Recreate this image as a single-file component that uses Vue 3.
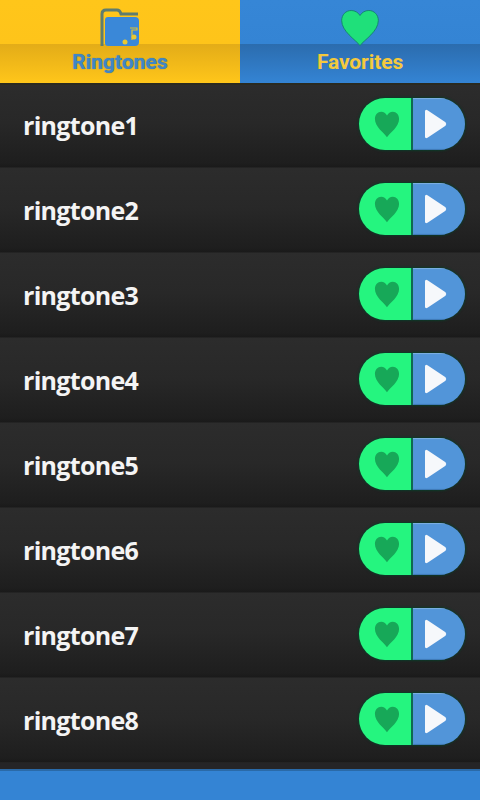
<script setup>
const rows = ['ringtone1','ringtone2','ringtone3','ringtone4','ringtone5','ringtone6','ringtone7','ringtone8']
const heart = 'M12 22.500C9.500 19 2 14 2 7.500C2 4 4.300 1.500 7.200 1.500C9.300 1.500 11 2.700 12 4.500C13 2.700 14.700 1.500 16.800 1.500C19.700 1.500 22 4 22 7.500C22 14 14.500 19 12 22.500Z'
</script>

<template>
  <div class="app">
    <div class="tabs">
      <div class="tab tab-on">
        <svg class="tab-icon" viewBox="0 0 40 40" width="40" height="40">
          <path d="M2 38V6Q2 2 6 2H17Q20 2 21 6H38" fill="none" stroke="#5f7d6e" stroke-width="3"/>
          <path d="M5 12Q5 9 8 9H35Q39 9 39 13V34Q39 38 35 38H8Q5 38 5 35Z" fill="#3a88d8"/>
          <path d="M30 20H37V22H32V32" fill="none" stroke="#e0c030" stroke-width="1.200"/>
          <circle cx="25" cy="34" r="2.500" fill="#e8c832"/>
          <circle cx="34" cy="29" r="2.500" fill="#e8c832"/>
        </svg>
        <span class="tab-label label-blue">Ringtones</span>
      </div>
      <div class="tab tab-off">
        <svg class="tab-icon" viewBox="0 0 24 24" width="44" height="40" preserveAspectRatio="none">
          <path :d="heart" fill="#1fe07a" stroke="#12806a" stroke-width=".5"/>
        </svg>
        <span class="tab-label label-yellow">Favorites</span>
      </div>
    </div>
    <div class="list">
      <div v-for="r in rows" :key="r" class="row">
        <span class="name">{{ r }}</span>
        <div class="pill">
          <div class="fav">
            <svg viewBox="0 0 24 24" width="30" height="29"><path :d="heart" fill="#17a858"/></svg>
          </div>
          <div class="play">
            <svg viewBox="0 0 24 32" width="24" height="32"><path d="M2 3.500Q2 1 4.500 2.200L22.500 14.300Q24 16 22.500 17.700L4.500 29.800Q2 31 2 28.500Z" fill="#f6f8fb"/></svg>
          </div>
        </div>
      </div>
    </div>
    <div class="footer"></div>
  </div>
</template>

<style scoped>
.app {
  width: 480px;
  height: 800px;
  display: flex;
  flex-direction: column;
  background: #26272a;
  overflow: hidden;
}
.tabs {
  display: flex;
  height: 83px;
  flex: none;
  position: relative;
  box-shadow: 0 2px 0 #2a2a20;
}
.tab {
  width: 240px;
  display: flex;
  flex-direction: column;
  align-items: center;
  padding-top: 8px;
  box-sizing: border-box;
}
.tab-on {
  background: linear-gradient(#ffc61a 0, #fec41a 44px, #e3ac18 44px, #ffc61a 83px);
}
.tab-off {
  background: linear-gradient(#3686d6 0, #3484d4 44px, #2b6cae 44px, #3484d4 83px);
}
.tab-icon {
  flex: none;
  height: 40px;
}
.tab-label {
  font-family: Roboto, sans-serif;
  font-weight: 700;
  font-size: 21px;
  line-height: 24px;
  margin-top: 2px;
}
.label-blue {
  color: #3f86c6;
  text-shadow: 0 0 1px #3a6e90;
}
.label-yellow {
  color: #f4c93c;
  letter-spacing: -0.1px;
}
.list {
  flex: none;
  height: 686px;
  background: #252527;
}
.row {
  height: 85px;
  box-sizing: border-box;
  display: flex;
  align-items: center;
  justify-content: space-between;
  padding: 0 15px 3px 23px;
  background: linear-gradient(#2c2c2c 0, #282828 40px, #1e1e1e 80px, #1a1a1a 84px, #2d2d2d 85px);
}
.name {
  font-family: "Open Sans", sans-serif;
  font-weight: 700;
  font-size: 25px;
  color: #f4f4f4;
  letter-spacing: -0.7px;
  padding-top: 2px;
}
.pill {
  width: 106px;
  height: 52px;
  border-radius: 26px;
  overflow: hidden;
  display: flex;
  box-shadow: 0 0 2px 1px #0c3a28;
}
.fav {
  width: 54px;
  background: #25f57f;
  display: flex;
  align-items: center;
  justify-content: center;
  border-right: 2px solid #0f6a50;
  padding-left: 3px;
  box-sizing: border-box;
}
.play {
  flex: 1;
  background: #5295d9;
  box-shadow: inset 0 1px 1px #7fb0e2, inset 0 -1px 1px #3f78b4;
  display: flex;
  align-items: center;
  justify-content: center;
  padding-right: 8px;
  box-sizing: border-box;
}
.footer {
  flex: 1;
  background: #3484d4;
  border-top: 2px solid #2a6aa8;
}
</style>
